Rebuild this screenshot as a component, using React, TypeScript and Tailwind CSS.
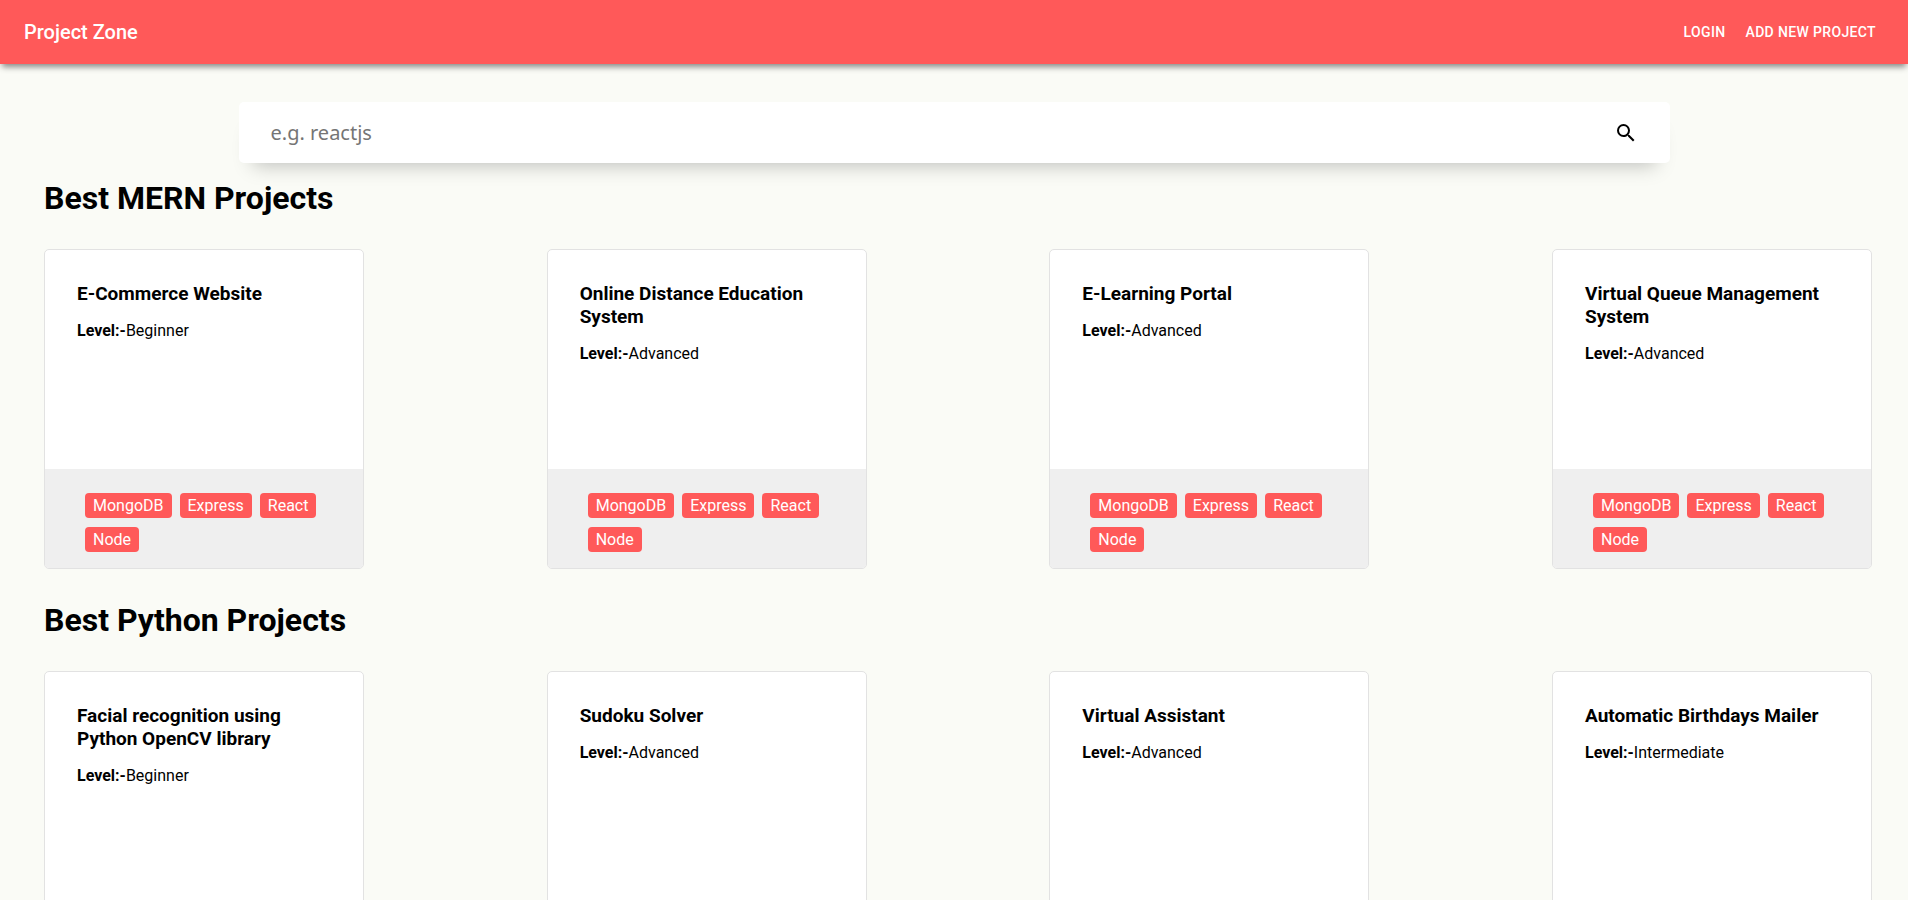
import { MdSearch } from "react-icons/md";

type Project = { title: string; level: string; tags: string[] };
type Section = { heading: string; projects: Project[] };

const mern = ["MongoDB", "Express", "React", "Node"];

const sections: Section[] = [
  {
    heading: "Best MERN Projects",
    projects: [
      { title: "E-Commerce Website", level: "Beginner", tags: mern },
      { title: "Online Distance Education System", level: "Advanced", tags: mern },
      { title: "E-Learning Portal", level: "Advanced", tags: mern },
      { title: "Virtual Queue Management System", level: "Advanced", tags: mern },
    ],
  },
  {
    heading: "Best Python Projects",
    projects: [
      { title: "Facial recognition using Python OpenCV library", level: "Beginner", tags: [] },
      { title: "Sudoku Solver", level: "Advanced", tags: [] },
      { title: "Virtual Assistant", level: "Advanced", tags: [] },
      { title: "Automatic Birthdays Mailer", level: "Intermediate", tags: [] },
    ],
  },
];

function Header() {
  return (
    <header className="flex h-16 items-center justify-between bg-[#ff5959] px-6 text-white shadow-[0_5px_6px_-2px_rgba(0,0,0,0.45)]">
      <a href="#" className="text-xl font-medium">
        Project Zone
      </a>
      <nav className="flex gap-1 text-sm font-medium tracking-wide uppercase">
        <button type="button" className="px-2 py-1.5 uppercase">Login</button>
        <button type="button" className="px-2 py-1.5 uppercase">Add new project</button>
      </nav>
    </header>
  );
}

function SearchBar() {
  return (
    <form
      role="search"
      onSubmit={(e) => e.preventDefault()}
      className="mx-auto mt-[38px] flex h-[61px] w-3/4 items-center rounded-[5px] bg-white px-8 shadow-[0_16px_20px_-14px_rgba(0,0,0,0.25)]"
    >
      <input
        type="search"
        aria-label="Search projects"
        placeholder="e.g. reactjs"
        className="min-w-0 flex-1 bg-transparent font-['Noto_Sans',sans-serif] text-xl outline-none placeholder:text-[#757575]"
      />
      <button type="submit" aria-label="Search" className="text-black">
        <MdSearch className="size-6" />
      </button>
    </form>
  );
}

function ProjectCard({ title, level, tags }: Project) {
  return (
    <article className="flex h-80 w-80 flex-col overflow-hidden rounded-[5px] border border-[#e2e2e2] bg-white">
      <div className="flex-1 px-8 pt-8">
        <h3 className="text-[19px] leading-[23px] font-bold">{title}</h3>
        <p className="mt-3.5 text-base leading-6">
          <b>Level:-</b>
          {level}
        </p>
      </div>
      <ul className="flex flex-wrap gap-x-2 gap-y-[9px] bg-[#efefef] pt-6 pr-8 pb-4 pl-10">
        {tags.map((tag) => (
          <li key={tag} className="rounded-sm bg-[#ff5959] px-2 text-base leading-[25px] text-white">
            {tag}
          </li>
        ))}
      </ul>
    </article>
  );
}

export default function App() {
  return (
    <div className="min-h-screen bg-[#fafbf6] font-[Roboto,sans-serif] text-black">
      <Header />
      <SearchBar />
      <main className="pr-9 pb-8 pl-11">
        {sections.map((section) => (
          <section key={section.heading} className="pt-4 pb-4">
            <h2 className="text-[32px] leading-[38px] font-bold">{section.heading}</h2>
            <div className="mt-8 flex flex-wrap justify-between gap-y-8">
              {section.projects.map((project) => (
                <ProjectCard key={project.title} {...project} />
              ))}
            </div>
          </section>
        ))}
      </main>
    </div>
  );
}
